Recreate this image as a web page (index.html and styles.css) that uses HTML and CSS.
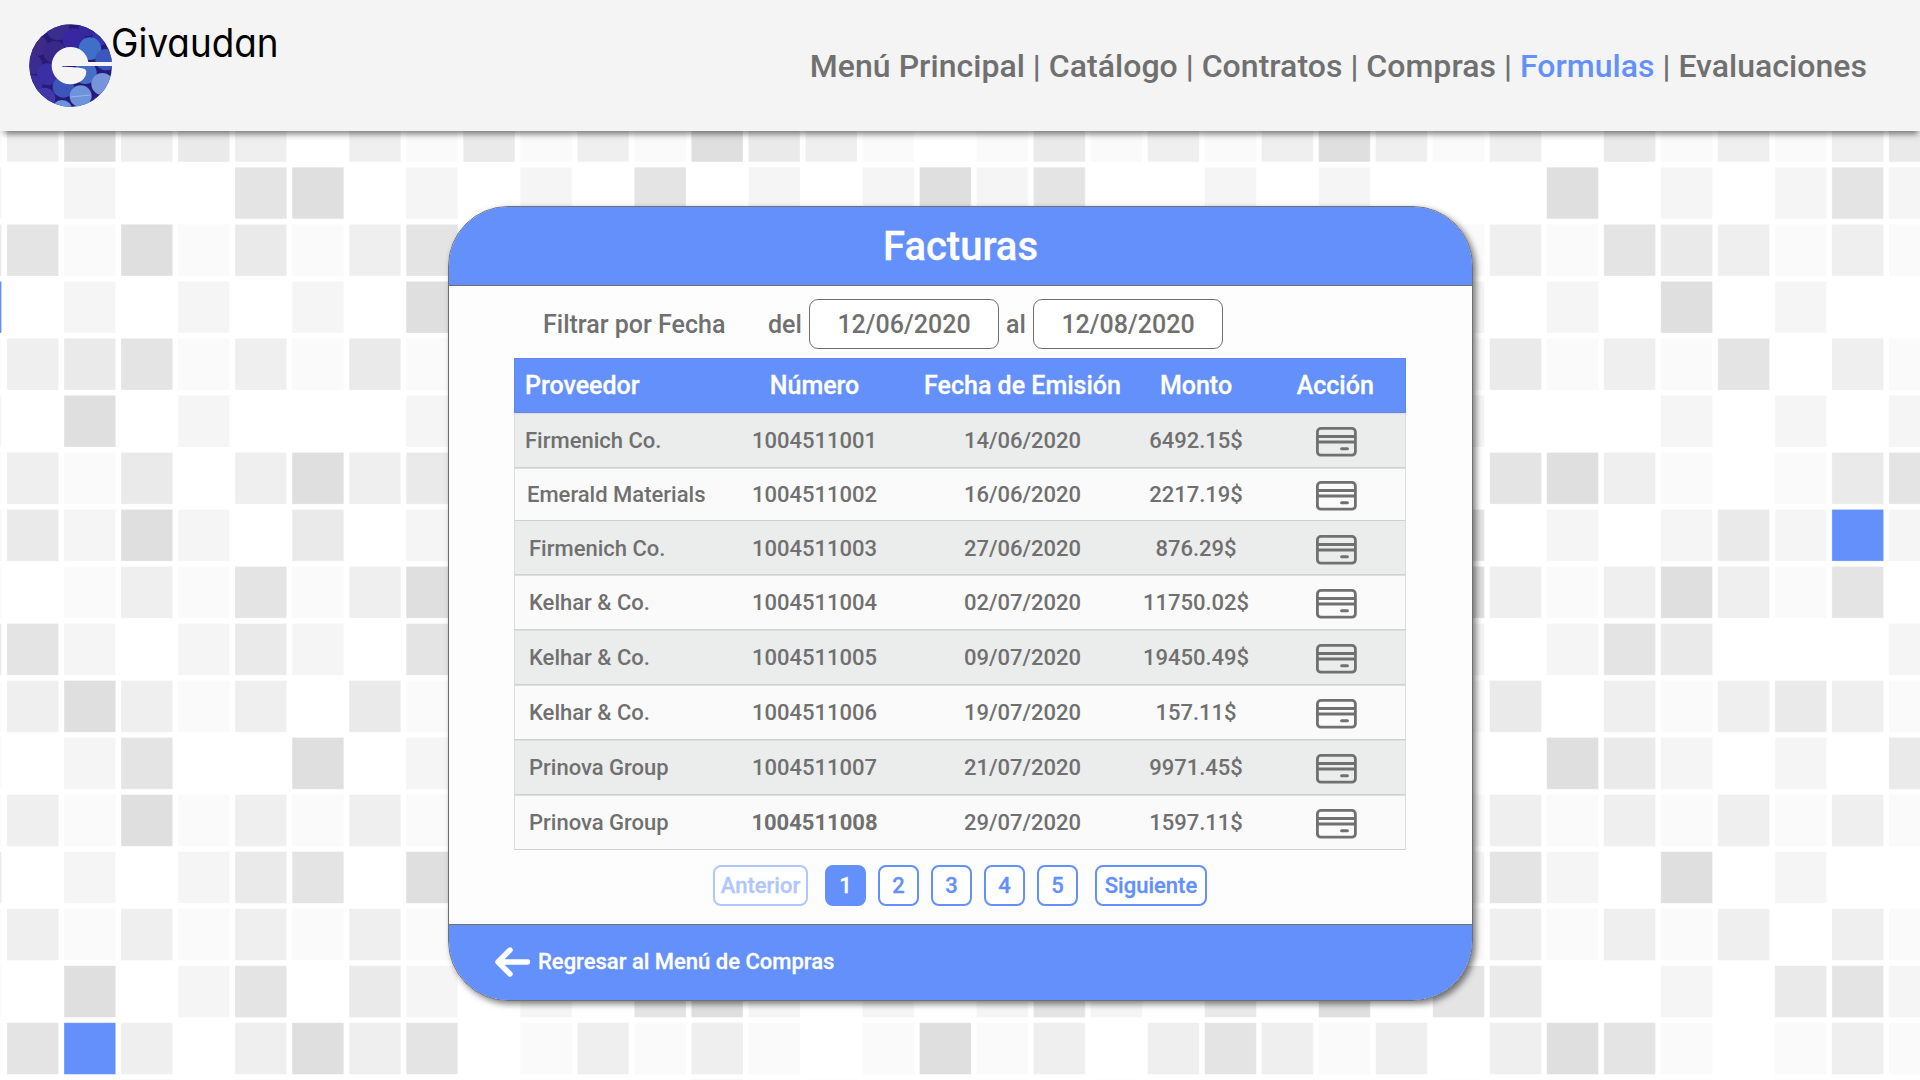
FILE: index.html
```html
<!DOCTYPE html>
<html lang="es">
<head>
<meta charset="utf-8">
<title>Facturas</title>
<link rel="stylesheet" href="styles.css">
</head>
<body>
<svg class="mosaic" id="mosaic" width="1920" height="1080" aria-hidden="true"></svg>
<svg class="defs" width="0" height="0" aria-hidden="true">
  <symbol id="card-icon" viewBox="0 0 41 30">
    <rect x="1.4" y="1.4" width="38" height="26.8" rx="3.5" fill="none" stroke="#707070" stroke-width="2.8"/>
    <path d="M1 9.5H40M1 15H40" stroke="#707070" stroke-width="2.8" fill="none"/>
    <path d="M25.6 21.8H31.4" stroke="#707070" stroke-width="3" stroke-linecap="round"/>
  </symbol>
</svg>

<header class="topbar">
  <div class="brand">
    <svg class="brand-mark" viewBox="87 71 250 250" role="img" aria-label="Givaudan">
      <clipPath id="disc"><circle cx="212" cy="196" r="124"/></clipPath>
      <g clip-path="url(#disc)">
        <rect x="87" y="71" width="250" height="250" fill="#251a78"/>
        <circle cx="174" cy="86" r="34" fill="#3b2d8c"/>
        <circle cx="112" cy="136" r="31" fill="#3d2b86"/>
        <circle cx="164" cy="156" r="34" fill="#3a2888"/>
        <circle cx="97" cy="192" r="30" fill="#3b2c90"/>
        <circle cx="222" cy="118" r="34" fill="#3727a0"/>
        <circle cx="262" cy="82" r="26" fill="#3528a0"/>
        <circle cx="300" cy="112" r="24" fill="#3333ac"/>
        <circle cx="270" cy="145" r="34" fill="#3f6fc9"/>
        <circle cx="318" cy="178" r="32" fill="#3b57bd"/>
        <circle cx="144" cy="222" r="33" fill="#3a30a6"/>
        <circle cx="100" cy="252" r="28" fill="#3a2f9c"/>
        <circle cx="134" cy="294" r="32" fill="#4238aa"/>
        <circle cx="190" cy="260" r="32" fill="#3c55b8"/>
        <circle cx="256" cy="217" r="34" fill="#456fc6"/>
        <circle cx="307" cy="251" r="33" fill="#7793d9"/>
        <circle cx="242" cy="288" r="33" fill="#6f92dc"/>
        <circle cx="186" cy="330" r="31" fill="#6c94de"/>
        <circle cx="292" cy="312" r="24" fill="#2c2490"/>
        <path d="M212 290L272 284" stroke="#9db4e8" stroke-width="3"/>
      </g>
      <path fill="#f4f4f4" d="M340 185H265C261 158 238 140 211 140A56 56 0 0 0 211 252C240 251 260 235 259 212C256 202 240 201 187 199V197H340Z"/>
    </svg>
    <svg class="brand-name" width="170" height="44"><text x="0" y="34" textLength="167.5" lengthAdjust="spacingAndGlyphs">Givaudan</text></svg>
  </div>
  <nav class="menu"><a>Menú Principal</a> | <a>Catálogo</a> | <a>Contratos</a> | <a>Compras</a> | <a class="active">Formulas</a> | <a>Evaluaciones</a></nav>
</header>

<main class="panel">
  <h1 class="panel-title">Facturas</h1>
  <section class="panel-body">
    <div class="filter">
      <span class="filter-label">Filtrar por Fecha</span>
      <span class="filter-from">del</span>
      <span class="date">12/06/2020</span>
      <span class="filter-to">al</span>
      <span class="date">12/08/2020</span>
    </div>
    <div class="table">
      <div class="row head"><span>Proveedor</span><span>Número</span><span>Fecha de Emisión</span><span>Monto</span><span>Acción</span></div>
      <div class="row odd first"><span>Firmenich Co.</span><span>1004511001</span><span>14/06/2020</span><span>6492.15$</span><span><svg class="card"><use href="#card-icon"/></svg></span></div>
      <div class="row second"><span>Emerald Materials</span><span>1004511002</span><span>16/06/2020</span><span>2217.19$</span><span><svg class="card"><use href="#card-icon"/></svg></span></div>
      <div class="row odd third"><span>Firmenich Co.</span><span>1004511003</span><span>27/06/2020</span><span>876.29$</span><span><svg class="card"><use href="#card-icon"/></svg></span></div>
      <div class="row"><span>Kelhar &amp; Co.</span><span>1004511004</span><span>02/07/2020</span><span>11750.02$</span><span><svg class="card"><use href="#card-icon"/></svg></span></div>
      <div class="row odd"><span>Kelhar &amp; Co.</span><span>1004511005</span><span>09/07/2020</span><span>19450.49$</span><span><svg class="card"><use href="#card-icon"/></svg></span></div>
      <div class="row"><span>Kelhar &amp; Co.</span><span>1004511006</span><span>19/07/2020</span><span>157.11$</span><span><svg class="card"><use href="#card-icon"/></svg></span></div>
      <div class="row odd"><span>Prinova Group</span><span>1004511007</span><span>21/07/2020</span><span>9971.45$</span><span><svg class="card"><use href="#card-icon"/></svg></span></div>
      <div class="row"><span>Prinova Group</span><span class="strong">1004511008</span><span>29/07/2020</span><span>1597.11$</span><span><svg class="card"><use href="#card-icon"/></svg></span></div>
    </div>
    <div class="pager">
      <span class="page prev">Anterior</span>
      <span class="page current">1</span>
      <span class="page">2</span>
      <span class="page">3</span>
      <span class="page">4</span>
      <span class="page">5</span>
      <span class="page next">Siguiente</span>
    </div>
  </section>
  <footer class="panel-footer">
    <svg class="arrow" viewBox="0 0 35 30"><path d="M15 3L3 15L15 27M4 15H32.5" fill="none" stroke="#fff" stroke-width="5.4" stroke-linecap="round" stroke-linejoin="round"/></svg>
    <span>Regresar al Menú de Compras</span>
  </footer>
</main>
<script src="mosaic.js"></script>
</body>
</html>
```
FILE: styles.css
```css
* { box-sizing: border-box; }
body {
  margin: 0;
  width: 1920px;
  height: 1080px;
  overflow: hidden;
  background: #fff;
  color: #707070;
  font-family: Roboto, "Liberation Sans", sans-serif;
  font-weight: 500;
  font-size: 22px;
}
.mosaic { position: absolute; left: 0; top: 0; z-index: -1; }
.defs { position: absolute; }

.topbar {
  height: 131px;
  padding: 23px 53px 0 29px;
  display: flex;
  justify-content: space-between;
  background: #f4f4f4;
  box-shadow: 1px 6px 6px -3px rgba(0, 0, 0, .5);
}
.brand { display: flex; align-items: flex-start; }
.brand-mark { width: 83.3px; height: 83.3px; margin-top: .5px; }
.brand-name { margin: 0 0 0 -1px; overflow: visible; }
.brand-name text {
  font-family: Inter, "Liberation Sans", sans-serif;
  font-weight: 400;
  font-size: 39px;
  font-feature-settings: "cv11";
  fill: #000;
}
.menu { font-size: 32px; line-height: 38px; letter-spacing: .03px; margin-top: 24px; white-space: nowrap; }
.active { color: #6490fb; }

.panel {
  width: 1025px;
  height: 795px;
  margin: 75px 0 0 448px;
  display: flex;
  flex-direction: column;
  border: 1px solid #707070;
  border-radius: 60px;
  overflow: hidden;
  background: #fdfdfd;
  box-shadow: 3px 3px 6px rgba(0, 0, 0, .5);
}
.panel-title {
  margin: 0;
  height: 79px;
  border-bottom: 1px solid #707070;
  background: #6490fb;
  color: #fff;
  font-size: 40px;
  font-weight: 500;
  line-height: 80px;
  text-align: center;
}
.panel-title, .row.head, .page, .panel-footer { -webkit-text-stroke: .3px currentColor; }
.panel-body { flex: 1; }
.filter {
  display: flex;
  align-items: center;
  height: 50px;
  margin: 13px 0 9px 94px;
  font-size: 25px;
}
.filter-label { width: 225px; }
.filter-from { width: 41px; }
.filter-to { width: 34px; padding-left: 7px; }
.date {
  width: 190px;
  height: 50px;
  border: 1px solid #707070;
  border-radius: 9px;
  background: #fff;
  line-height: 50px;
  text-align: center;
}

.table { width: 892px; margin-left: 65px; }
.row {
  display: grid;
  grid-template-columns: 195.5px 208px 208px 139px 139.5px;
  align-items: center;
  height: 55px;
  border: 1px solid #dcdcdc;
  border-top: 0;
  border-bottom-color: #cfd0d0;
  background: #fafafa;
  box-shadow: inset 0 1px #dddede;
  text-align: center;
}
.row > span:first-child { text-align: left; padding-left: 14px; white-space: nowrap; }
.odd { background: #ebedec; }
.row.head { background: #6490fb; border: 1px solid #5f88ea; box-shadow: none; color: #fff; font-size: 25px; }
.row.head > span:first-child, .row.first > span:first-child { padding-left: 10px; }
.row.second { height: 53px; }
.row.second > span:first-child { padding-left: 12px; }
.row.third { height: 54px; padding-top: 1px; box-shadow: none; }
.strong { font-weight: 700; }
.card { display: block; width: 41px; height: 30px; margin: 3px auto 0 50.5px; }

.pager { display: flex; gap: 12px; margin: 15px 0 0 264px; }
.page {
  width: 41px;
  height: 41px;
  border: 2px solid #6490fb;
  border-radius: 8px;
  background: #fff;
  color: #6490fb;
  line-height: 37px;
  text-align: center;
}
.current { background: #6490fb; color: #fff; }
.prev { width: 95px; margin-right: 5px; border-color: #b0c7fd; color: #b0c7fd; }
.next { width: 112px; margin-left: 5px; }

.panel-footer {
  height: 76px;
  padding: 0 0 2px 46px;
  display: flex;
  align-items: center;
  gap: 8px;
  border-top: 1px solid #707070;
  background: #6490fb;
  color: #fff;
}
.arrow { width: 35px; height: 30px; }
```
FILE: mosaic.js
```js
// Each character is one tile: 0 empty, 1-6 grey from lightest to darkest, B blue.
// A dot marks a tile hidden behind the panel.
const rows = [
  "136343031 413164310 14131363 130413134",
  "202005602 020502026 25002020 006020252",
  "451614135 ......... ........ 131543131",
  "B02020206 ......... ........ 202060200",
  "134513141 ......... ........ 141315031",
  "206020002 ......... ........ 200020202",
  "131403634 ......... ........ 056310145",
  "242620402 ......... ........ 5020242B2",
  "101315136 ......... ........ 631363150",
  "452024205 ......... ........ 202540002",
  "136313041 ......... ........ 140313431",
  "102500602 ......... ........ 006420204",
  "131613131 ......... ........ 131313131",
  "402024506 ......... ........ 252060200",
  "131313131 ......... ........ 131313031",
  "106025042 020562020 25204060 540020452",
  "15B303635 013131016 13035313 036510131",
  "000402000 020050200 20200000 202020200"
];
const fills = { 1: "#fafafa", 2: "#f5f5f5", 3: "#efefef", 4: "#eaeaea", 5: "#e4e4e4", 6: "#dfdfdf", B: "#6490fb" };
const svg = document.getElementById("mosaic");
const pitch = 57.03;
let out = "";
rows.forEach((row, r) => {
  [...row.replaceAll(" ", "")].forEach((code, c) => {
    if (!fills[code]) return;
    const x = (-50.1 + c * pitch).toFixed(1);
    const y = (110.2 + r * pitch).toFixed(1);
    out += `<rect x="${x}" y="${y}" width="51.7" height="51.7" fill="${fills[code]}" stroke="#fff" stroke-opacity=".4" stroke-width=".8"/>`;
  });
});
svg.innerHTML = out;
```
